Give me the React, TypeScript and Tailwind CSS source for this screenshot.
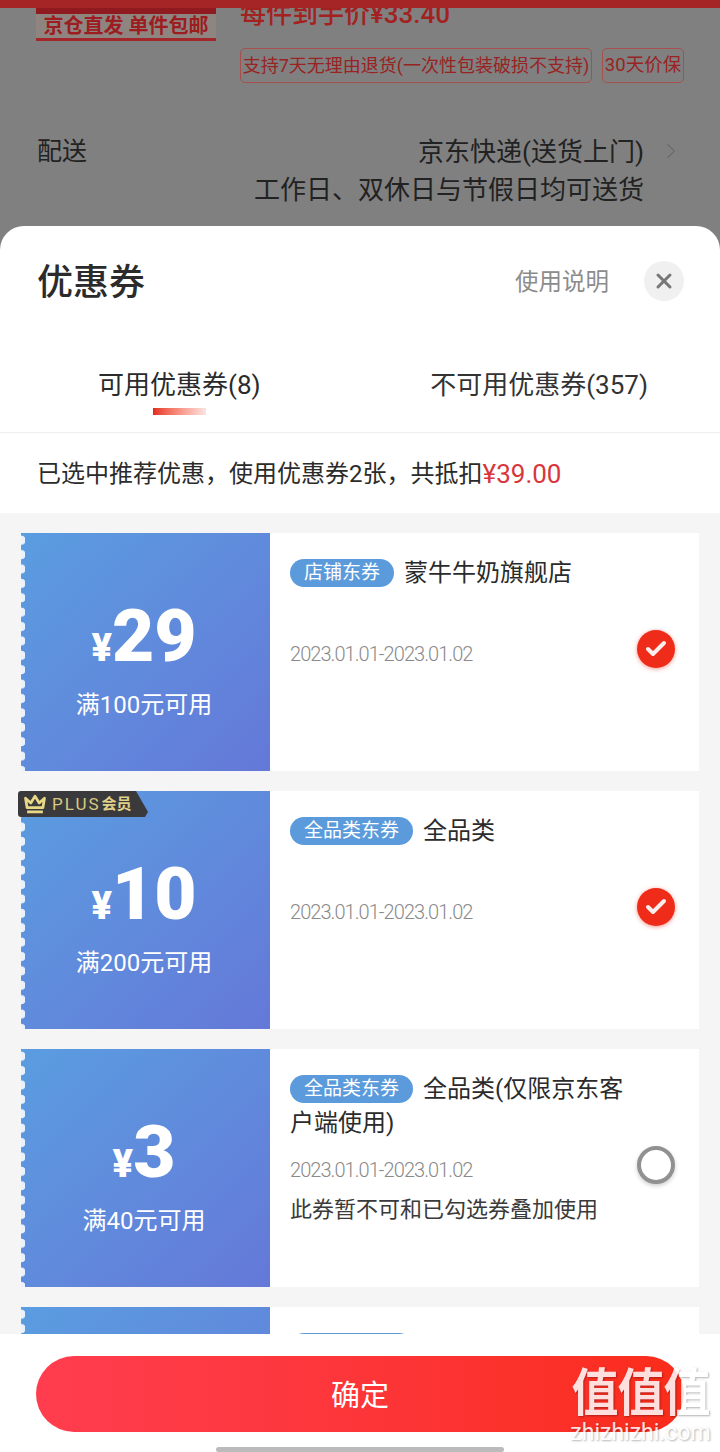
import { Check, ChevronRight, X } from 'lucide-react';

const cjk = "font-['Roboto','Noto_Sans_CJK_SC',sans-serif]";

type CouponData = {
  amount: string;
  rule: string;
  tag: string;
  title: string;
  note?: string;
  checked: boolean;
  plus?: boolean;
};

const coupons: CouponData[] = [
  { amount: '29', rule: '满100元可用', tag: '店铺东券', title: '蒙牛牛奶旗舰店', checked: true },
  { amount: '10', rule: '满200元可用', tag: '全品类东券', title: '全品类', checked: true, plus: true },
  {
    amount: '3',
    rule: '满40元可用',
    tag: '全品类东券',
    title: '全品类(仅限京东客户端使用)',
    note: '此券暂不可和已勾选券叠加使用',
    checked: false,
  },
  { amount: '5', rule: '满50元可用', tag: '全品类东券', title: '全品类', checked: false },
];

const PlusBadge = () => (
  <div className="absolute -left-[3px] top-0 z-10 flex h-[26px] w-[130px] items-center gap-[4px] rounded-l-[3px] bg-[#3a3a3d] pl-[4px] [clip-path:polygon(0_0,118px_0,130px_21px,127px_26px,0_26px)]">
    <svg width="26" height="20" viewBox="0 0 24 19" fill="none" stroke="#e9d987" strokeWidth="2.6">
      <path d="M3 4l5 4.5L12 2l4 6.5L21 4l-1.5 9h-15z" strokeLinejoin="round" />
      <path d="M4.5 17h15" />
    </svg>
    <span className="text-[17px] leading-none tracking-[2px] text-[#d9c97e]">PLUS</span>
    <span className="-ml-[3px] text-[15px] font-bold leading-none text-[#e0d088]">会员</span>
  </div>
);

const Coupon = ({ coupon }: { coupon: CouponData }) => (
  <div className="relative flex h-[238px] shrink-0">
    {coupon.plus && <PlusBadge />}
    <div className="relative flex w-[249px] shrink-0 flex-col items-center bg-gradient-to-br from-[#5a9de0] to-[#6478d8] pr-[3px] text-white">
      <div className="absolute inset-y-0 left-0 w-[4px] bg-[radial-gradient(circle_at_0_50%,#eaf3fd_4.4px,transparent_5px)] bg-[length:4px_14.4px]" />
      <div className="mt-[57px] flex h-[92px] items-baseline justify-center">
        <span className="text-[38px] font-black leading-none">¥</span>
        <span className="text-[73px] font-black leading-[92px]">{coupon.amount}</span>
      </div>
      <div className="mt-[7px] text-[24px] leading-[32px]">{coupon.rule}</div>
    </div>
    <div className="flex flex-1 items-start bg-white pl-[20px] pr-[24px] pt-[23px]">
      <div className="w-[336px]">
        <div className="min-h-[68px] text-[24px] leading-[34px] text-[#2b2b2b]">
          <span className="mr-[10px] inline-flex h-[28px] items-center rounded-full bg-[#5b9bdb] px-[14px] align-[2px] text-[19px] leading-none text-white">
            {coupon.tag}
          </span>
          {coupon.title}
        </div>
        <div className="mt-[16px] text-[20px] font-light leading-[28px] tracking-[-0.95px] text-[#8a8a8a]">
          2023.01.01-2023.01.02
        </div>
        {coupon.note && <div className="mt-[12px] text-[22px] leading-[28px] text-[#3a3a3a]">{coupon.note}</div>}
      </div>
      <div className="mt-[74px] ml-auto shrink-0">
        {coupon.checked ? (
          <div className="flex h-[38px] w-[38px] items-center justify-center rounded-full bg-[#ee2c19] shadow-[0_1px_4px_rgba(238,44,25,0.5)]">
            <Check size={24} strokeWidth={4} className="text-[#fdeeee]" />
          </div>
        ) : (
          <div className="h-[38px] w-[38px] rounded-full border-[4px] border-[#919191] bg-white shadow-[0_2px_4px_rgba(0,0,0,0.2)]" />
        )}
      </div>
    </div>
  </div>
);

export default function App() {
  return (
    <div className={`relative flex h-[1452px] w-[720px] flex-col overflow-hidden bg-[#808080] ${cjk}`}>
      <div className="absolute inset-x-0 top-0 z-10 h-[8px] bg-[#a52425]" />

      {/* dimmed product page behind the sheet */}
      <div className="flex h-[226px] shrink-0 flex-col">
        <div className="flex h-[84px] shrink-0 pl-[36px] pr-[36px]">
          <div className="flex h-[41px] w-[180px] shrink-0 flex-col">
            <div className="h-[14px] shrink-0 bg-[#8f1a20]" />
            <div className="flex flex-1 items-center justify-center border-b-[3px] border-[#a3262a] bg-[#8f8580] text-[20px] font-bold leading-none text-[#9c1c20]">
              京仓直发 单件包邮
            </div>
          </div>
          <div className="ml-[24px] flex flex-col">
            <div className="mt-[1px] h-[26px] whitespace-nowrap text-[26px] font-medium leading-[26px] text-[#a3211f]">每件到手价¥33.40</div>
            <div className="mt-[21px] flex gap-[10px]">
              <span className="flex h-[35px] w-[352px] items-center justify-center whitespace-nowrap rounded-[5px] border border-[#a5504c] text-[18px] leading-none text-[#992323]">
                支持7天无理由退货(一次性包装破损不支持)
              </span>
              <span className="flex h-[35px] w-[82px] items-center justify-center whitespace-nowrap rounded-[5px] border border-[#a5504c] text-[18.5px] leading-none text-[#992323]">
                30天价保
              </span>
            </div>
          </div>
        </div>
        <div className="flex justify-between pl-[37px] pr-[36px] pt-[49px] text-[#222222]">
          <span className="text-[25px] leading-[38px]">配送</span>
          <div className="flex items-start">
            <div className="text-right text-[26px] leading-[38px]">
              <div>京东快递(送货上门)</div>
              <div>工作日、双休日与节假日均可送货</div>
            </div>
            <ChevronRight size={26} strokeWidth={1} className="ml-[14px] mt-[5px] text-[#6b6b6b]" />
          </div>
        </div>
      </div>

      {/* coupon sheet */}
      <div className="flex min-h-0 flex-1 flex-col overflow-hidden rounded-t-[24px] bg-white">
        <div className="flex h-[112px] shrink-0 items-start justify-between pl-[37px] pr-[36px] pt-[34px]">
          <span className="pt-[2px] text-[36px] font-medium leading-[42px] text-[#2b2b2b]">优惠券</span>
          <div className="flex items-center">
            <span className="pt-[2px] text-[23.5px] leading-[40px] text-[#8c8c8c]">使用说明</span>
            <span className="ml-[35px] flex h-[40px] w-[40px] items-center justify-center rounded-full bg-[#f0f0f0]">
              <X size={24} strokeWidth={3} className="text-[#777777]" />
            </span>
          </div>
        </div>
        <div className="flex h-[95px] shrink-0 border-b border-[#eeeeee] pl-[98px] pr-[72px] text-[26px] leading-[36px]">
          <div className="flex flex-col items-center pt-[29px] text-[#2b2b2b]">
            <span>可用优惠券(8)</span>
            <span className="mt-[5px] h-[7px] w-[53px] bg-gradient-to-r from-[#e5281e] to-[#fbe4e2]" />
          </div>
          <div className="ml-auto pt-[29px] text-[#333333]">不可用优惠券(357)</div>
        </div>
        <div className="flex h-[80px] shrink-0 items-center pl-[37px] pt-[2px] text-[24px] leading-none text-[#2b2b2b]">
          已选中推荐优惠，使用优惠券2张，共抵扣<span className="text-[26px] text-[#d8363c]">¥39.00</span>
        </div>
        <div className="flex min-h-0 flex-1 flex-col gap-[20px] overflow-hidden bg-[#f5f5f5] pl-[21px] pr-[21px] pt-[20px]">
          {coupons.map((coupon) => (
            <Coupon key={coupon.tag + coupon.amount} coupon={coupon} />
          ))}
        </div>
        <div className="flex h-[118px] shrink-0 flex-col items-center bg-white pt-[22px]">
          <button className="flex h-[76px] w-[648px] items-center justify-center rounded-full bg-gradient-to-r from-[#ff3d4e] to-[#fa2c19] pt-[5px] text-[29px] text-white">
            确定
          </button>
          <div className="mt-[15px] h-[5px] w-[288px] rounded-full bg-[#bbbbbb]" />
        </div>
      </div>

      {/* site watermark */}
      <div className="absolute bottom-[7px] right-[9px] z-20 flex w-[141px] flex-col items-center text-white [text-shadow:1px_1px_2px_rgba(0,0,0,0.35)]">
        <div className="scale-y-110 whitespace-nowrap text-[47px] font-bold leading-[50px] tracking-[-1px] opacity-85">值值值</div>
        <div className="mt-[3px] text-[23px] leading-[24px] opacity-85">zhizhizhi.com</div>
      </div>
    </div>
  );
}
